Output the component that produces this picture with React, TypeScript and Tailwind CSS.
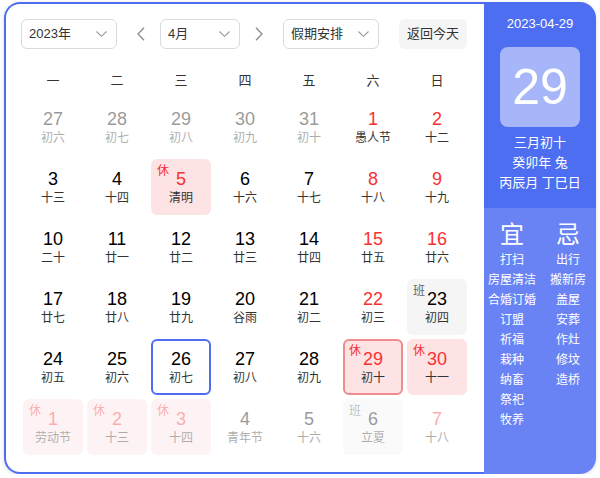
import React from "react";

type Day = {
  n: number;
  l: string;
  faded?: boolean;
  red?: boolean;
  rest?: boolean;
  work?: boolean;
  today?: boolean;
  selected?: boolean;
};

const rows: Day[][] = [
  [
    { n: 27, l: "初六", faded: true },
    { n: 28, l: "初七", faded: true },
    { n: 29, l: "初八", faded: true },
    { n: 30, l: "初九", faded: true },
    { n: 31, l: "初十", faded: true },
    { n: 1, l: "愚人节", red: true },
    { n: 2, l: "十二", red: true },
  ],
  [
    { n: 3, l: "十三" },
    { n: 4, l: "十四" },
    { n: 5, l: "清明", red: true, rest: true },
    { n: 6, l: "十六" },
    { n: 7, l: "十七" },
    { n: 8, l: "十八", red: true },
    { n: 9, l: "十九", red: true },
  ],
  [
    { n: 10, l: "二十" },
    { n: 11, l: "廿一" },
    { n: 12, l: "廿二" },
    { n: 13, l: "廿三" },
    { n: 14, l: "廿四" },
    { n: 15, l: "廿五", red: true },
    { n: 16, l: "廿六", red: true },
  ],
  [
    { n: 17, l: "廿七" },
    { n: 18, l: "廿八" },
    { n: 19, l: "廿九" },
    { n: 20, l: "谷雨" },
    { n: 21, l: "初二" },
    { n: 22, l: "初三", red: true },
    { n: 23, l: "初四", work: true },
  ],
  [
    { n: 24, l: "初五" },
    { n: 25, l: "初六" },
    { n: 26, l: "初七", today: true },
    { n: 27, l: "初八" },
    { n: 28, l: "初九" },
    { n: 29, l: "初十", red: true, rest: true, selected: true },
    { n: 30, l: "十一", red: true, rest: true },
  ],
  [
    { n: 1, l: "劳动节", red: true, rest: true, faded: true },
    { n: 2, l: "十三", red: true, rest: true, faded: true },
    { n: 3, l: "十四", red: true, rest: true, faded: true },
    { n: 4, l: "青年节", faded: true },
    { n: 5, l: "十六", faded: true },
    { n: 6, l: "立夏", work: true, faded: true },
    { n: 7, l: "十八", red: true, faded: true },
  ],
];

const yi = ["打扫", "房屋清洁", "合婚订婚", "订盟", "祈福", "栽种", "纳畜", "祭祀", "牧养"];
const ji = ["出行", "搬新房", "盖屋", "安葬", "作灶", "修坟", "造桥"];

function Chevron() {
  return (
    <svg width="11" height="6" viewBox="0 0 11 6" fill="none">
      <path d="M0.5 0.5 L5.5 5.3 L10.5 0.5" stroke="#9a9a9a" strokeWidth="1.1" />
    </svg>
  );
}

function Cell({ d }: { d: Day }) {
  const bordered = d.selected || d.today;
  let cls = "relative m-[2px] h-[56px] rounded-md flex flex-col items-center justify-center";
  if (d.selected) cls += " border-2 border-[#f08c8c] bg-[#fde3e4]";
  else if (d.today) cls += " border-2 border-[#4e6ef2]";
  else if (d.rest) cls += " bg-[#fde3e4]";
  else if (d.work) cls += " bg-[#f5f5f5]";
  if (d.faded) cls += " opacity-40";
  const pos = bordered ? "left-[4px] top-[3px]" : "left-[6px] top-[5px]";
  return (
    <div className={cls}>
      {d.rest && (
        <span className={"absolute text-[12px] leading-[14px] text-[#f73131] " + pos}>休</span>
      )}
      {d.work && (
        <span className={"absolute text-[12px] leading-[14px] text-[#666] " + pos}>班</span>
      )}
      <span className={"text-[18px] leading-[22px] " + (d.red ? "text-[#f73131]" : "text-[#000]")}>{d.n}</span>
      <span className="text-[12px] leading-[16px] text-[#333]">{d.l}</span>
    </div>
  );
}

export default function App() {
  return (
    <div
      className="pl-1 pt-[2px]"
      style={{ fontFamily: '"Liberation Sans", "Noto Sans CJK SC", sans-serif' }}
    >
      <div className="flex w-[592px] h-[472px] rounded-2xl shadow-[0_1px_4px_rgba(0,0,0,0.15)]">
        <div className="flex-1 border-2 border-r-0 border-[#4e6ef2] rounded-l-2xl bg-white p-[15px] flex flex-col">
          <div className="flex items-center h-[30px] text-[13px] text-[#333]">
            <div className="w-[96px] h-[30px] border border-[#d9dbe3] rounded-md flex items-center justify-between pl-[7px] pr-[9px]">
              <span>2023年</span>
              <Chevron />
            </div>
            <svg className="ml-[20px]" width="8" height="14" viewBox="0 0 8 14" fill="none">
              <path d="M7 0.8 L1 7 L7 13.2" stroke="#8a8a8a" strokeWidth="1.3" />
            </svg>
            <div className="ml-[15px] w-[80px] h-[30px] border border-[#d9dbe3] rounded-md flex items-center justify-between pl-[7px] pr-[9px]">
              <span>4月</span>
              <Chevron />
            </div>
            <svg className="ml-[15px]" width="8" height="14" viewBox="0 0 8 14" fill="none">
              <path d="M1 0.8 L7 7 L1 13.2" stroke="#8a8a8a" strokeWidth="1.3" />
            </svg>
            <div className="ml-[20px] w-[96px] h-[30px] border border-[#d9dbe3] rounded-md flex items-center justify-between pl-[7px] pr-[9px]">
              <span>假期安排</span>
              <Chevron />
            </div>
            <div className="ml-[20px] w-[68px] h-[30px] rounded-md bg-[#f5f5f5] flex items-center justify-center">
              返回今天
            </div>
          </div>
          <div className="grid grid-cols-7 w-[448px] mt-[16px] h-[36px] items-center text-[13px] text-[#333]">
            {["一", "二", "三", "四", "五", "六", "日"].map((w) => (
              <div key={w} className="text-center">{w}</div>
            ))}
          </div>
          <div className="grid grid-cols-7 w-[448px]">
            {rows.flat().map((d, i) => (
              <Cell key={i} d={d} />
            ))}
          </div>
        </div>
        <div className="w-[112px] rounded-r-2xl overflow-hidden flex flex-col text-white">
          <div className="bg-[#4e6ef2] h-[206px] flex flex-col items-center pt-[12px]">
            <div className="text-[13px] leading-[20px]">2023-04-29</div>
            <div className="mt-[13px] w-[80px] h-[80px] rounded-lg bg-[#a6b6f8] flex items-center justify-center text-[50px] leading-none">
              29
            </div>
            <div className="mt-[6px] text-[13px] leading-[20px] text-center">
              <div>三月初十</div>
              <div>癸卯年 兔</div>
              <div>丙辰月 丁巳日</div>
            </div>
          </div>
          <div className="flex-1 bg-[#6983f4] grid grid-cols-2 pt-[12px] content-start">
            <div className="flex flex-col items-center">
              <div className="text-[24px] leading-[30px]">宜</div>
              {yi.map((t) => (
                <div key={t} className="text-[12px] leading-[20px] whitespace-nowrap">{t}</div>
              ))}
            </div>
            <div className="flex flex-col items-center">
              <div className="text-[24px] leading-[30px]">忌</div>
              {ji.map((t) => (
                <div key={t} className="text-[12px] leading-[20px] whitespace-nowrap">{t}</div>
              ))}
            </div>
          </div>
        </div>
      </div>
    </div>
  );
}
